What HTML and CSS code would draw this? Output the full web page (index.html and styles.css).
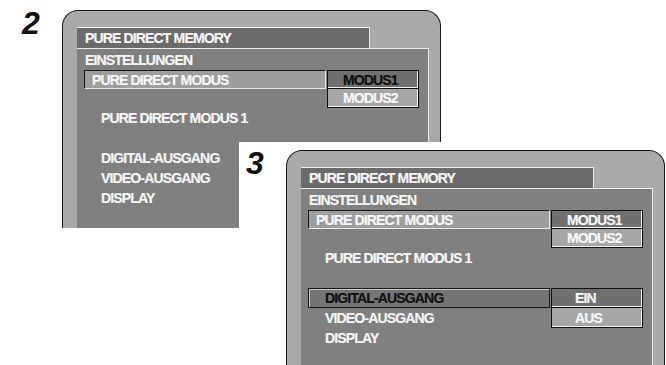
FILE: index.html
```html
<!DOCTYPE html>
<html lang="de">
<head>
    <meta charset="UTF-8">
    <meta name="viewport" content="width=device-width, initial-scale=1.0">
    <title>Pure Direct Memory</title>
    <link rel="stylesheet" href="styles.css">
</head>
<body>
    <div class="page">

        <!-- Schritt 2: Modus waehlen -->
        <section class="fig fig-2">
            <div class="step">2</div>
            <div class="screen">
                <div class="tab">PURE DIRECT MEMORY</div>
                <div class="menu">
                    <div class="cell title row-1">EINSTELLUNGEN</div>
                    <div class="cell box box-lit row-2">PURE DIRECT MODUS</div>
                    <div class="opt opt-dark opt-sel row-2">MODUS1</div>
                    <div class="opt opt-lit row-3">MODUS2</div>
                    <div class="cell sub row-4">PURE DIRECT MODUS 1</div>
                    <div class="cell sub row-6">DIGITAL-AUSGANG</div>
                    <div class="cell sub row-7">VIDEO-AUSGANG</div>
                    <div class="cell sub row-8">DISPLAY</div>
                </div>
            </div>
        </section>

        <!-- Schritt 3: Ausgaenge einstellen -->
        <section class="fig fig-3">
            <div class="step">3</div>
            <div class="screen">
                <div class="tab">PURE DIRECT MEMORY</div>
                <div class="menu">
                    <div class="cell title row-1">EINSTELLUNGEN</div>
                    <div class="cell box box-lit row-2">PURE DIRECT MODUS</div>
                    <div class="opt opt-dark row-2">MODUS1</div>
                    <div class="opt opt-lit row-3">MODUS2</div>
                    <div class="cell sub row-4">PURE DIRECT MODUS 1</div>
                    <div class="cell box box-dark box-deep row-6">DIGITAL-AUSGANG</div>
                    <div class="opt opt-dark opt-wide row-6">EIN</div>
                    <div class="opt opt-lit opt-wide row-7">AUS</div>
                    <div class="cell sub row-7">VIDEO-AUSGANG</div>
                    <div class="cell sub row-8">DISPLAY</div>
                </div>
            </div>
        </section>

    </div>
</body>
</html>
```

FILE: styles.css
```css
* {
    box-sizing: border-box;
}
body {
    margin: 0;
    background: #fff;
    font-family: "Liberation Sans", Arial, sans-serif;
}
.page {
    position: relative;
    width: 666px;
    height: 365px;
    overflow: hidden;
    padding: 2px 0 0 15px;
}
.fig {
    display: flex;
    width: 427px;
    height: 226px;
    overflow: hidden;
    background: #fff;
}
/* figure 3 sits over the lower right part of figure 2 */
.fig-3 {
    position: absolute;
    left: 239px;
    top: 142px;
}
.step {
    width: 47px;
    flex: none;
    padding: 5px 0 0 7px;
    font-size: 32px;
    line-height: 32px;
    font-weight: bold;
    font-style: italic;
    color: #111;
}
.screen {
    width: 379px;
    height: 260px;
    flex: none;
    margin-top: 8px;
    padding: 16px 0 0 14px;
    background: #a9a9a9;
    border: 1px solid #1a1a1a;
    border-bottom: none;
    border-radius: 16px 16px 0 0;
}
.tab, .cell, .opt {
    font-size: 14px;
    font-weight: bold;
    letter-spacing: -0.85px;
    color: #f6f6f6;
    -webkit-text-stroke: 0.2px;
    white-space: nowrap;
}
.tab {
    width: 293px;
    height: 21px;
    padding-left: 8px;
    line-height: 20px;
    background: #6b6b6b;
    border-top: 1px solid #ececec;
    border-right: 1px solid #ececec;
}
.menu {
    display: grid;
    grid-template-columns: 242px 92px;
    grid-template-rows: 21px 19px 19px 20px 20px 20px 20px 20px;
    column-gap: 1px;
    width: 352px;
    height: 220px;
    padding-left: 7px;
    background: #808080;
    border-top: 1px solid #ececec;
    border-right: 1px solid #ececec;
}
.cell {
    grid-column: 1;
    display: flex;
    align-items: center;
}
.title {
    padding-left: 1px;
}
.sub {
    padding-left: 17px;
}
.box {
    padding-left: 7px;
    border: 1px solid #1a1a1a;
}
.box-lit {
    background: #9e9e9e;
    border-right-color: #e8e8e8;
    border-bottom-color: #e8e8e8;
}
.box-dark {
    background: #747474;
    color: #111;
    box-shadow: inset 1px 1px 0 #c8c8c8;
}
.box-deep {
    padding-left: 16px;
}
.opt {
    grid-column: 2;
    display: flex;
    align-items: center;
    padding-left: 15px;
    border: 1px solid #111;
    box-shadow: inset -1px -1px 0 #f0f0f0;
}
.opt-wide {
    padding-left: 23px;
}
.opt-dark {
    background: #707070;
}
.opt-lit {
    background: #a7a7a7;
    border-top: none;
}
.opt-sel {
    color: #111;
}
.row-1 { grid-row: 1; }
.row-2 { grid-row: 2; }
.row-3 { grid-row: 3; }
.row-4 { grid-row: 4; }
.row-6 { grid-row: 6; }
.row-7 { grid-row: 7; }
.row-8 { grid-row: 8; }
```
